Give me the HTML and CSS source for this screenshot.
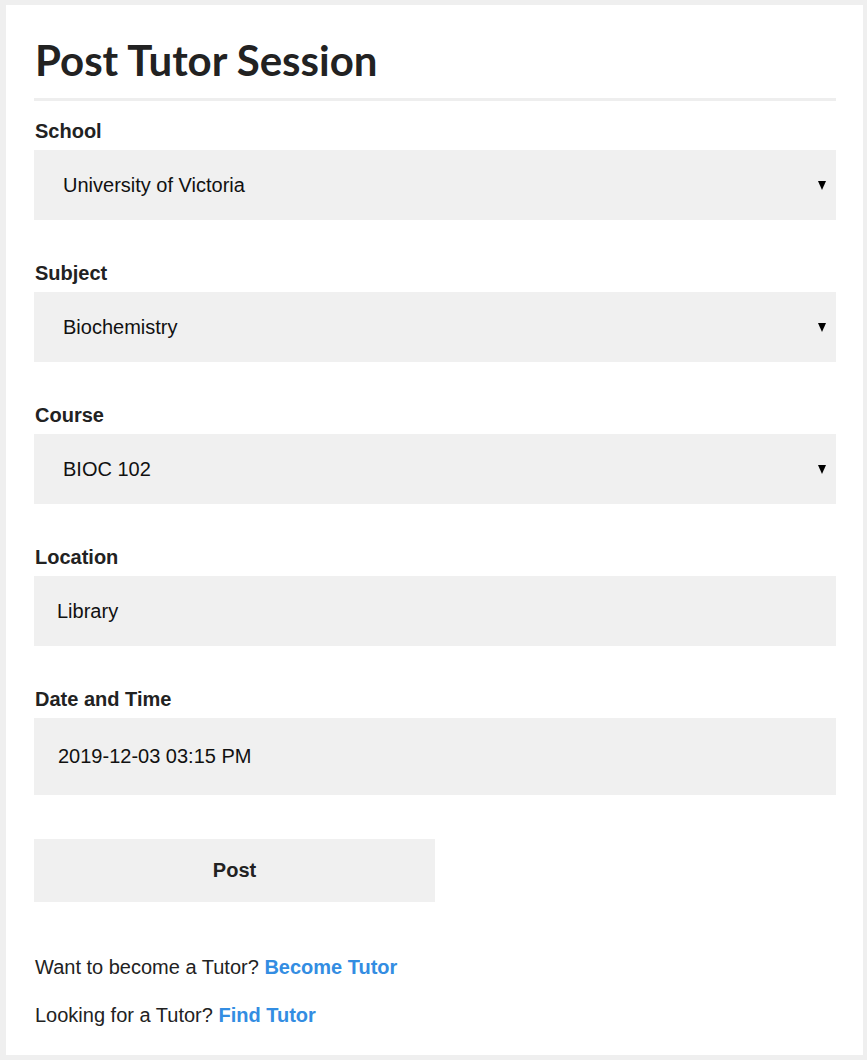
FILE: index.html
```html
<!DOCTYPE html>
<html lang="en">
<head>
<meta charset="utf-8">
<title>Post Tutor Session</title>
<link rel="stylesheet" href="styles.css">
</head>
<body>
<main class="card">
  <h1 class="title">Post Tutor Session</h1>
  <form class="form">
    <div class="field">
      <label class="label" for="school">School</label>
      <div class="select-wrap">
        <select id="school" class="control control--select"><option>University of Victoria</option></select>
      </div>
    </div>
    <div class="field">
      <label class="label" for="subject">Subject</label>
      <div class="select-wrap">
        <select id="subject" class="control control--select"><option>Biochemistry</option></select>
      </div>
    </div>
    <div class="field">
      <label class="label" for="course">Course</label>
      <div class="select-wrap">
        <select id="course" class="control control--select"><option>BIOC 102</option></select>
      </div>
    </div>
    <div class="field">
      <label class="label" for="location">Location</label>
      <input id="location" class="control control--input" type="text" value="Library">
    </div>
    <div class="field">
      <label class="label" for="datetime">Date and Time</label>
      <input id="datetime" class="control control--input control--date" type="text" value="2019-12-03 03:15 PM">
    </div>
    <button class="btn" type="button">Post</button>
  </form>
  <p class="hint">Want to become a Tutor? <a class="hint__link" href="#">Become Tutor</a></p>
  <p class="hint">Looking for a Tutor? <a class="hint__link" href="#">Find Tutor</a></p>
</main>
</body>
</html>
```

FILE: styles.css
```css
html, body {
  margin: 0;
  padding: 0;
}

body {
  background: #efefef;
  padding: 5px 4px 4px 6px;
  font-family: "Liberation Sans", Arial, sans-serif;
  color: #222222;
}

.card {
  background: #ffffff;
  padding: 30px 27px 28px 28px;
}

.title {
  margin: 0;
  font-family: Lato, "Liberation Sans", sans-serif;
  font-weight: 700;
  font-size: 42px;
  line-height: 50px;
  color: #222222;
  padding: 0 0 13px 1px;
  border-bottom: 3px solid #eeeeee;
}

.form {
  margin: 18px 0 0;
  display: flex;
  flex-direction: column;
}

.field {
  display: flex;
  flex-direction: column;
  margin-bottom: 41px;
}

.field:last-of-type {
  margin-bottom: 44px;
}

.label {
  font-size: 20px;
  line-height: 24px;
  font-weight: 700;
  margin: 0 0 7px 1px;
  color: #222222;
}

.select-wrap {
  position: relative;
}

.select-wrap::after {
  content: "";
  position: absolute;
  right: 10px;
  top: 31px;
  width: 0;
  height: 0;
  border-left: 4px solid transparent;
  border-right: 4px solid transparent;
  border-top: 9px solid #000000;
  pointer-events: none;
}

.control {
  display: block;
  width: 100%;
  box-sizing: border-box;
  border: 0;
  border-radius: 0;
  background: #f0f0f0;
  font-family: "Liberation Sans", Arial, sans-serif;
  font-size: 20px;
  color: #111111;
  height: 70px;
  margin: 0;
  outline: none;
}

.control--select {
  -webkit-appearance: none;
  appearance: none;
  padding: 0 40px 0 29px;
}

.control--input {
  padding: 0 23px;
}

.control--date {
  height: 77px;
  padding-left: 24px;
}

.btn {
  width: 401px;
  height: 63px;
  border: 0;
  border-radius: 0;
  background: #f0f0f0;
  font-family: "Liberation Sans", Arial, sans-serif;
  font-size: 20px;
  font-weight: 700;
  color: #222222;
  padding: 0;
  cursor: pointer;
}

.hint {
  margin: 0;
  font-size: 20px;
  line-height: 24px;
  padding-left: 1px;
  color: #222222;
}

.hint + .hint {
  margin-top: 24px;
}

.form + .hint {
  margin-top: 53px;
}

.hint__link {
  color: #338de2;
  font-weight: 700;
  text-decoration: none;
}
```
